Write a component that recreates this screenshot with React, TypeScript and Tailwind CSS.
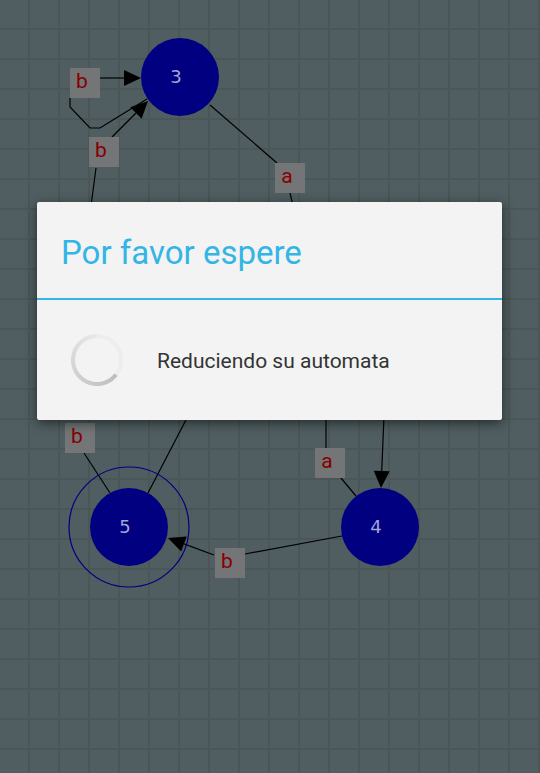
import React from 'react';

type Pt = [number, number];

const R = 39;

const nodes = [
  { id: '3', x: 180, y: 77, final: false },
  { id: '5', x: 129, y: 527, final: true },
  { id: '4', x: 380, y: 527, final: false },
];

const labels: { t: string; x: number; y: number }[] = [
  { t: 'b', x: 70, y: 68 },
  { t: 'b', x: 89, y: 137 },
  { t: 'a', x: 275, y: 163 },
  { t: 'b', x: 65, y: 423 },
  { t: 'a', x: 315, y: 448 },
  { t: 'b', x: 215, y: 548 },
];

const lines: Pt[][] = [
  [[70, 98], [70, 107], [90, 128], [100, 128], [147, 99]],
  [[96, 168], [91, 206]],
  [[210, 105], [277, 163]],
  [[290, 193], [293, 206]],
  [[84, 453], [110, 493]],
  [[188, 416], [148, 493]],
  [[326, 416], [326, 448]],
  [[341, 478], [356, 496]],
  [[342, 536], [245, 554]],
];

// arrows: from -> tip
const arrows: [Pt, Pt][] = [
  [[100, 78], [141, 78]],
  [[112, 137], [148, 101]],
  [[384, 416], [381, 488]],
  [[214, 555], [168, 538]],
];

function arrowHead(from: Pt, tip: Pt, len = 17, half = 8) {
  const dx = tip[0] - from[0];
  const dy = tip[1] - from[1];
  const d = Math.hypot(dx, dy);
  const ux = dx / d;
  const uy = dy / d;
  const bx = tip[0] - ux * len;
  const by = tip[1] - uy * len;
  const p1 = `${bx - uy * half},${by + ux * half}`;
  const p2 = `${bx + uy * half},${by - ux * half}`;
  return { poly: `${tip[0]},${tip[1]} ${p1} ${p2}`, base: [bx, by] as Pt };
}

function GraphCanvas() {
  return (
    <svg width="540" height="773" viewBox="0 0 540 773" className="block">
      <defs>
        <pattern id="grid" x="-2" y="-2" width="30" height="30" patternUnits="userSpaceOnUse">
          <rect width="30" height="30" fill="#505e61" />
          <rect x="0" y="0" width="30" height="2" fill="#4a5657" />
          <rect x="0" y="0" width="2" height="30" fill="#4a5657" />
        </pattern>
      </defs>
      <rect width="540" height="773" fill="url(#grid)" />

      {lines.map((pts, i) => (
        <polyline
          key={i}
          points={pts.map((p) => p.join(',')).join(' ')}
          fill="none"
          stroke="#000"
          strokeWidth="1.2"
        />
      ))}

      {arrows.map(([from, tip], i) => {
        const h = arrowHead(from, tip);
        return (
          <g key={i}>
            <line x1={from[0]} y1={from[1]} x2={h.base[0]} y2={h.base[1]} stroke="#000" strokeWidth="1.2" />
            <polygon points={h.poly} fill="#000" />
          </g>
        );
      })}

      {nodes.map((n) => (
        <g key={n.id}>
          {n.final && <circle cx={n.x} cy={n.y} r={60} fill="none" stroke="#000080" strokeWidth="1.2" />}
          <circle cx={n.x} cy={n.y} r={R} fill="#000080" />
          <text
            x={n.x - 4}
            y={n.y + 6}
            fontSize="18"
            fill="#a3a3d6"
            textAnchor="middle"
            fontFamily="'DejaVu Sans', sans-serif"
          >
            {n.id}
          </text>
        </g>
      ))}

      {labels.map((l, i) => (
        <g key={i}>
          <rect x={l.x} y={l.y} width="30" height="30" fill="#747577" />
          <text
            x={l.x + 12}
            y={l.y + 20}
            fontSize="21"
            fill="#870000"
            textAnchor="middle"
            fontFamily="'Roboto', sans-serif"
          >
            {l.t}
          </text>
        </g>
      ))}
    </svg>
  );
}

function Spinner() {
  // arc from top, counter-clockwise, to lower-right, fading in
  const segs = 30;
  const start = -90;
  const span = 232;
  const r = 24;
  const cx = 27;
  const cy = 27;
  const parts = [];
  for (let i = 0; i < segs; i++) {
    const a0 = ((start - (span * i) / segs) * Math.PI) / 180;
    const a1 = ((start - (span * (i + 1)) / segs) * Math.PI) / 180;
    const x0 = cx + r * Math.cos(a0);
    const y0 = cy + r * Math.sin(a0);
    const x1 = cx + r * Math.cos(a1);
    const y1 = cy + r * Math.sin(a1);
    parts.push(
      <path
        key={i}
        d={`M${x0},${y0} A${r},${r} 0 0 0 ${x1},${y1}`}
        stroke="#bcbcbc"
        strokeOpacity={0.08 + (0.92 * (i + 1)) / segs}
        strokeWidth="4"
        fill="none"
      />
    );
  }
  return (
    <svg width="54" height="54" viewBox="0 0 54 54">
      <circle cx={cx} cy={cy} r={r} stroke="#ededed" strokeWidth="4" fill="none" />
      {parts}
    </svg>
  );
}

export default function App() {
  return (
    <div className="relative w-[540px] h-[773px] overflow-hidden bg-[#505e61]">
      <GraphCanvas />

      <div className="absolute left-[37px] top-[202px] w-[465px] bg-[#f3f3f3] rounded-[2px] shadow-[0_3px_12px_rgba(0,0,0,0.55)] font-['Roboto',sans-serif]">
        <div className="h-[96px] flex items-center pl-[24px] pt-[4px]">
          <h2 className="text-[33px] leading-none text-[#33b5e5] font-normal">Por favor espere</h2>
        </div>
        <div className="h-[2px] bg-[#33b5e5]" />
        <div className="h-[120px] flex items-center pl-[33px]">
          <Spinner />
          <p className="ml-[33px] mt-[3px] text-[21px] leading-none text-[#333333]">Reduciendo su automata</p>
        </div>
      </div>
    </div>
  );
}
